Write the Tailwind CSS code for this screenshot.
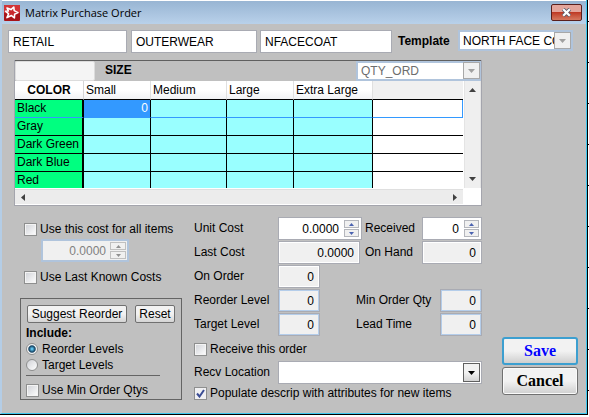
<!DOCTYPE html>
<html lang="en">
<head>
  <meta charset="UTF-8">
  <meta name="viewport" content="width=device-width, initial-scale=1.0">
  <title>Matrix Purchase Order</title>
  <script src="https://cdn.jsdelivr.net/npm/@tailwindcss/browser@4"></script>
</head>
<body class="min-h-screen bg-white bg-[repeating-linear-gradient(to_bottom,white_0_21px,black_21px_22px,white_22px_41px)] pr-px pb-[2px] font-['Liberation_Sans',Arial,sans-serif] text-[12px] leading-[16px] text-black">
  <div class="border-r border-b border-black">
  <div class="bg-[#c0c0c0] border-l-2 border-l-[#b4cde6] border-r border-b border-r-[#3cc8f0] border-b-[#3cc8f0]">

    <!-- Title bar -->
    <header class="flex h-6 items-center border-t border-white bg-linear-to-b from-[#98b5d3] to-[#b9d1ea] pl-[2px] pr-1">
      <svg class="size-4 shrink-0" viewBox="0 0 16 16">
        <rect width="16" height="16" rx="1" fill="#a81418"/>
        <rect width="16" height="8" rx="1" fill="#d23436"/>
        <path d="M3 3 L7 4.6 L9.8 2 L10.2 5.6 L14 7.6 L10.6 9.2 L10.4 13 L7.5 10.6 L3 12.6 L4.6 8.8 L1.6 6.2 L4.4 6 Z" fill="#c8282b" stroke="#fff" stroke-width="1.6" stroke-linejoin="round"/>
      </svg>
      <h1 class="ml-[5px] flex-1 font-['Open_Sans','Noto_Sans',sans-serif] text-[11px]">Matrix Purchase Order</h1>
      <button aria-label="Close" class="flex h-[17px] w-[31px] items-center justify-center rounded-[2px] border border-[#5a1f1c] bg-linear-to-b from-[#e4a59b] from-45% via-[#bf3a25] via-50% to-[#d5785f]">
        <svg class="h-[9px] w-[11px]" viewBox="0 0 11 9">
          <path d="M2.2 1.2 L8.8 7.8 M8.8 1.2 L2.2 7.8" stroke="#555b6b" stroke-width="3.8"/>
          <path d="M2.2 1.2 L8.8 7.8 M8.8 1.2 L2.2 7.8" stroke="#fff" stroke-width="2.2"/>
        </svg>
      </button>
    </header>

    <main class="pb-3">
      <!-- Item class row -->
      <div class="flex pt-[6px] pl-[6px] pr-[13px]">
        <input aria-label="Department" value="RETAIL" class="h-[23px] min-w-0 flex-[109] border border-[#a9abb3] bg-white px-1">
        <input aria-label="Category" value="OUTERWEAR" class="ml-1 h-[23px] min-w-0 flex-[116] border border-[#a9abb3] bg-white px-1">
        <input aria-label="Style" value="NFACECOAT" class="ml-[3px] h-[23px] min-w-0 flex-[122] border border-[#a9abb3] bg-white px-1">
        <label for="template" class="ml-[6px] w-[60px] pt-[3px] font-bold">Template</label>
        <div class="relative h-[21px] flex-[115]">
          <select id="template" class="block h-[21px] w-full appearance-none overflow-hidden border-2 border-[#b0c4dc] bg-white pl-[3px] pr-4 text-clip whitespace-nowrap">
            <option>NORTH FACE COAT</option>
          </select>
          <span class="pointer-events-none absolute top-[2px] right-[2px] flex h-[17px] w-[17px] items-center justify-center border border-[#a8a8a8] bg-[#f0f0f0]">
            <svg class="h-1 w-[7px]" viewBox="0 0 7 4"><path d="M0 0H7L3.5 4Z" fill="#a0a0a0"/></svg>
          </span>
        </div>
      </div>

      <!-- Matrix grid -->
      <section class="mt-[7px] mr-[104px] ml-3 border-r border-b border-l border-[#a4a5ad]">
        <div class="flex h-[21px] border-t border-[#606060]">
          <button aria-label="Size options" class="h-5 w-20 rounded-[2px] border border-[#dcdcdc] bg-[#f4f4f4]"></button>
          <span class="ml-[10px] flex-1 pt-px font-bold">SIZE</span>
          <div class="relative h-5 w-[125px]">
            <select aria-label="Quantity field" class="block h-5 w-full appearance-none border-2 border-[#b0c4dc] bg-white pl-[3px] text-[#6d6d6d]">
              <option>QTY_ORD</option>
            </select>
            <span class="pointer-events-none absolute top-px right-px flex h-[17px] w-[17px] items-center justify-center border border-[#a8a8a8] bg-[#f0f0f0]">
              <svg class="h-1 w-[7px]" viewBox="0 0 7 4"><path d="M0 0H7L3.5 4Z" fill="#a0a0a0"/></svg>
            </span>
          </div>
        </div>
        <div class="flex bg-white">
          <div class="h-[107px] min-w-0 flex-1 overflow-hidden">
            <table class="w-full table-fixed border-separate border-spacing-0 text-left [&_td]:h-[18px] [&_td]:border-r [&_td]:border-b [&_td]:border-black [&_td]:p-0 [&_td]:leading-[17px]">
              <colgroup>
                <col class="w-[69px]">
                <col class="w-[67px]">
                <col class="w-[76px]">
                <col class="w-[67px]">
                <col class="w-[79px]">
                <col>
              </colgroup>
              <thead>
                <tr class="[&>th]:h-[19px] [&>th]:border-b [&>th]:border-b-black [&>th]:bg-linear-to-b [&>th]:from-white [&>th]:from-50% [&>th]:to-[#f1f2f4] [&>th]:p-0 [&>th]:leading-4">
                  <th class="border-r border-r-[#d5d5d5] text-center font-bold">COLOR</th>
                  <th class="border-r border-r-[#e0e0e0] font-normal"><span class="pl-[2px]">Small</span></th>
                  <th class="border-r border-r-[#e0e0e0] font-normal"><span class="pl-[2px]">Medium</span></th>
                  <th class="border-r border-r-[#e0e0e0] font-normal"><span class="pl-[2px]">Large</span></th>
                  <th class="border-r border-r-[#e0e0e0] font-normal"><span class="pl-[2px]">Extra Large</span></th>
                  <th class="bg-none! bg-[#f0f0f0]"></th>
                </tr>
              </thead>
              <tbody class="[&_td:first-child]:border-r-2 [&_td:first-child]:bg-[#00ff80] [&_td:last-child]:border-r-0 [&_td:last-child]:bg-white [&_td]:bg-[#99ffff]">
                <tr class="[&>td]:border-b-[#3399ff]!">
                  <td><span class="pl-[2px]">Black</span></td>
                  <td class="bg-[#3399ff]! text-right text-white"><span class="pr-[2px]">0</span></td>
                  <td></td><td></td><td></td>
                  <td class="border-r! border-r-[#3399ff]!"></td>
                </tr>
                <tr><td><span class="pl-[2px]">Gray</span></td><td></td><td></td><td></td><td></td><td></td></tr>
                <tr><td class="whitespace-nowrap"><span class="pl-[2px]">Dark Green</span></td><td></td><td></td><td></td><td></td><td></td></tr>
                <tr><td><span class="pl-[2px]">Dark Blue</span></td><td></td><td></td><td></td><td></td><td></td></tr>
                <tr><td><span class="pl-[2px]">Red</span></td><td></td><td></td><td></td><td></td><td></td></tr>
              </tbody>
            </table>
          </div>
          <div class="ml-px flex w-[17px] flex-col items-center justify-between border-x border-[#e4e4e4] bg-[#efefef] py-[7px]">
            <svg class="h-1 w-[7px]" viewBox="0 0 7 4"><path d="M0 4H7L3.5 0Z" fill="#404040"/></svg>
            <svg class="h-1 w-[7px]" viewBox="0 0 7 4"><path d="M0 0H7L3.5 4Z" fill="#404040"/></svg>
          </div>
        </div>
        <div class="border-b border-white bg-white pt-px">
          <div class="mr-[18px] flex h-[15px] items-center justify-between border-t border-[#dfdfdf] bg-[#ececec] px-[6px]">
            <svg class="h-[7px] w-1" viewBox="0 0 4 7"><path d="M4 0V7L0 3.5Z" fill="#404040"/></svg>
            <svg class="h-[7px] w-1" viewBox="0 0 4 7"><path d="M0 0V7L4 3.5Z" fill="#404040"/></svg>
          </div>
        </div>
      </section>

      <div class="flex pt-[11px] pr-2">
        <!-- Cost options and reorder suggestions -->
        <div class="w-[192px] shrink-0 pl-[18px]">
          <label class="flex h-6 items-center pl-1">
            <input type="checkbox" class="size-[13px] appearance-none border border-[#8e8f8f] bg-linear-to-br from-[#cfd1d6] to-white shadow-[inset_0_0_0_1px_#f4f4f4]">
            <span class="ml-[3px]">Use this cost for all items</span>
          </label>
          <div class="mt-[-2px] ml-[21px] flex h-[23px] w-[88px] items-center border-2 border-[#b0c4dc] bg-[#f0f0f0] pr-px">
            <input aria-label="Cost for all items" value="0.0000" class="w-0 flex-1 pr-1 text-right text-[#808080]">
            <div class="flex flex-col gap-px">
              <button aria-label="Increase" class="flex h-2 w-4 items-center justify-center border border-[#c0c0c0]"><svg class="h-[3px] w-[5px]" viewBox="0 0 5 3"><path d="M0 3H5L2.5 0Z" fill="#909090"/></svg></button>
              <button aria-label="Decrease" class="flex h-2 w-4 items-center justify-center border border-[#c0c0c0]"><svg class="h-[3px] w-[5px]" viewBox="0 0 5 3"><path d="M0 0H5L2.5 3Z" fill="#909090"/></svg></button>
            </div>
          </div>
          <label class="mt-[3px] flex h-6 items-center pl-1">
            <input type="checkbox" class="size-[13px] appearance-none border border-[#8e8f8f] bg-linear-to-br from-[#cfd1d6] to-white shadow-[inset_0_0_0_1px_#f4f4f4]">
            <span class="ml-[3px]">Use Last Known Costs</span>
          </label>

          <fieldset class="mt-[9px] w-[162px] border border-[#646464] px-[5px] pt-[6px] pb-px">
            <div class="flex justify-between pr-px pl-px">
              <button class="h-[18px] w-[100px] rounded-[2px] border border-[#707070] bg-linear-to-b from-[#f2f2f2] from-50% to-[#d4d4d4] leading-[15px] whitespace-nowrap">Suggest Reorder</button>
              <button class="h-[18px] w-10 rounded-[2px] border border-[#707070] bg-linear-to-b from-[#f2f2f2] from-50% to-[#d4d4d4] leading-[15px]">Reset</button>
            </div>
            <div class="mt-[2px] font-bold">Include:</div>
            <label class="flex h-4 items-center">
              <input type="radio" name="include" checked class="size-3 appearance-none rounded-full border border-[#8e8f8f] bg-radial from-[#5cc0ec] from-10% via-[#12405f] via-45% to-[#f4f4f4] to-60%">
              <span class="ml-1">Reorder Levels</span>
            </label>
            <label class="flex h-4 items-center">
              <input type="radio" name="include" class="size-3 appearance-none rounded-full border border-[#8e8f8f] bg-linear-to-br from-[#cfd1d6] to-white">
              <span class="ml-1">Target Levels</span>
            </label>
            <hr class="mt-[2px] w-[134px] border-[#646464]">
            <label class="mt-[6px] flex h-4 items-center">
              <input type="checkbox" class="size-[13px] appearance-none border border-[#8e8f8f] bg-linear-to-br from-[#cfd1d6] to-white shadow-[inset_0_0_0_1px_#f4f4f4]">
              <span class="ml-[3px]">Use Min Order Qtys</span>
            </label>
          </fieldset>
        </div>

        <!-- Item quantities -->
        <div class="min-w-0 flex-1">
          <div class="flex h-6">
            <label for="unit" class="w-[84px] pt-[3px]">Unit Cost</label>
            <div class="flex h-[23px] w-[84px] items-center border border-[#a9abb3] bg-white pr-[2px]">
              <input id="unit" value="0.0000" class="w-0 flex-1 pr-[5px] text-right">
              <div class="flex flex-col gap-px">
                <button aria-label="Increase unit cost" class="flex h-2 w-[15px] items-center justify-center border border-[#b4b6bc] bg-[#f0f0f0]"><svg class="h-[3px] w-[5px]" viewBox="0 0 5 3"><path d="M0 3H5L2.5 0Z" fill="#4a62b0"/></svg></button>
                <button aria-label="Decrease unit cost" class="flex h-2 w-[15px] items-center justify-center border border-[#b4b6bc] bg-[#f0f0f0]"><svg class="h-[3px] w-[5px]" viewBox="0 0 5 3"><path d="M0 0H5L2.5 3Z" fill="#4a62b0"/></svg></button>
              </div>
            </div>
            <label for="received" class="ml-[3px] flex-1 pt-[3px]">Received</label>
            <div class="flex h-[23px] w-[60px] items-center border border-[#a9abb3] bg-white pr-[2px]">
              <input id="received" value="0" class="w-0 flex-1 pr-[5px] text-right">
              <div class="flex flex-col gap-px">
                <button aria-label="Increase received" class="flex h-2 w-[15px] items-center justify-center border border-[#b4b6bc] bg-[#f0f0f0]"><svg class="h-[3px] w-[5px]" viewBox="0 0 5 3"><path d="M0 3H5L2.5 0Z" fill="#4a62b0"/></svg></button>
                <button aria-label="Decrease received" class="flex h-2 w-[15px] items-center justify-center border border-[#b4b6bc] bg-[#f0f0f0]"><svg class="h-[3px] w-[5px]" viewBox="0 0 5 3"><path d="M0 0H5L2.5 3Z" fill="#4a62b0"/></svg></button>
              </div>
            </div>
          </div>
          <div class="flex h-6">
            <label for="last" class="w-[84px] pt-[3px]">Last Cost</label>
            <input id="last" readonly value="0.0000" class="h-[23px] w-[82px] border border-[#a9abb3] bg-[#f0f0f0] pr-[5px] text-right shadow-[inset_0_0_0_1px_#fff]">
            <label for="onhand" class="ml-[5px] flex-1 pt-[3px]">On Hand</label>
            <input id="onhand" readonly value="0" class="h-[23px] w-[60px] border border-[#a9abb3] bg-[#f0f0f0] pr-[5px] text-right shadow-[inset_0_0_0_1px_#fff]">
          </div>
          <div class="flex h-6">
            <label for="onorder" class="w-[84px] pt-[3px]">On Order</label>
            <input id="onorder" readonly value="0" class="h-[23px] w-[42px] border border-[#a9abb3] bg-[#f0f0f0] pr-[5px] text-right shadow-[inset_0_0_0_1px_#fff]">
          </div>
          <div class="flex h-6">
            <label for="reorder" class="w-[84px] pt-[3px]">Reorder Level</label>
            <input id="reorder" readonly value="0" class="h-[23px] w-[42px] border border-[#a9abb3] bg-[#f0f0f0] pr-[5px] text-right shadow-[inset_0_0_0_1px_#b4cdea]">
            <label for="minqty" class="ml-9 flex-1 pt-[3px]">Min Order Qty</label>
            <input id="minqty" readonly value="0" class="h-[23px] w-[42px] border border-[#a9abb3] bg-[#f0f0f0] pr-[5px] text-right shadow-[inset_0_0_0_1px_#b4cdea]">
          </div>
          <div class="flex h-6">
            <label for="target" class="w-[84px] pt-[3px]">Target Level</label>
            <input id="target" readonly value="0" class="h-[23px] w-[42px] border border-[#a9abb3] bg-[#f0f0f0] pr-[5px] text-right shadow-[inset_0_0_0_1px_#b4cdea]">
            <label for="lead" class="ml-9 flex-1 pt-[3px]">Lead Time</label>
            <input id="lead" readonly value="0" class="h-[23px] w-[42px] border border-[#a9abb3] bg-[#f0f0f0] pr-[5px] text-right shadow-[inset_0_0_0_1px_#b4cdea]">
          </div>
          <label class="mt-1 flex h-4 items-center">
            <input type="checkbox" class="size-[13px] appearance-none border border-[#8e8f8f] bg-linear-to-br from-[#cfd1d6] to-white shadow-[inset_0_0_0_1px_#f4f4f4]">
            <span class="ml-[3px]">Receive this order</span>
          </label>
          <div class="mt-1 flex h-6">
            <label for="recv" class="w-[84px] pt-[3px]">Recv Location</label>
            <div class="relative h-[23px] flex-1">
              <select id="recv" class="block h-[23px] w-full appearance-none border border-[#a9abb3] bg-white pl-1">
                <option></option>
              </select>
              <span class="pointer-events-none absolute top-[2px] right-[2px] flex h-[19px] w-[17px] items-center justify-center border border-[#606060] bg-linear-to-b from-[#f2f2f2] from-50% to-[#d4d4d4]">
                <svg class="h-1 w-[7px]" viewBox="0 0 7 4"><path d="M0 0H7L3.5 4Z" fill="#000"/></svg>
              </span>
            </div>
          </div>
          <label class="flex h-4 items-center whitespace-nowrap">
            <span class="relative flex">
              <input type="checkbox" checked class="size-[13px] appearance-none border border-[#8e8f8f] bg-[#f0f0f2]">
              <svg class="pointer-events-none absolute top-[2px] left-[2px] size-[9px]" viewBox="0 0 9 9"><path d="M1 4.5L3.5 7.5L8 1" fill="none" stroke="#3a4c94" stroke-width="2"/></svg>
            </span>
            <span class="ml-[3px]">Populate descrip with attributes for new items</span>
          </label>
        </div>

        <div class="ml-5 flex w-[76px] flex-col justify-end gap-[2px] pb-[6px] font-['Liberation_Serif','Times_New_Roman',serif] text-[16px] font-bold">
          <button class="h-7 rounded-[3px] border-2 border-[#3c9fd0] bg-linear-to-b from-[#f2f2f2] from-50% to-[#cfcfcf] text-[#0000ff]">Save</button>
          <button class="h-7 rounded-[3px] border border-[#707070] bg-linear-to-b from-[#f2f2f2] from-50% to-[#cfcfcf] shadow-[inset_0_0_0_1px_#fafafa]">Cancel</button>
        </div>
      </div>
    </main>
  </div>
  </div>
</body>
</html>
